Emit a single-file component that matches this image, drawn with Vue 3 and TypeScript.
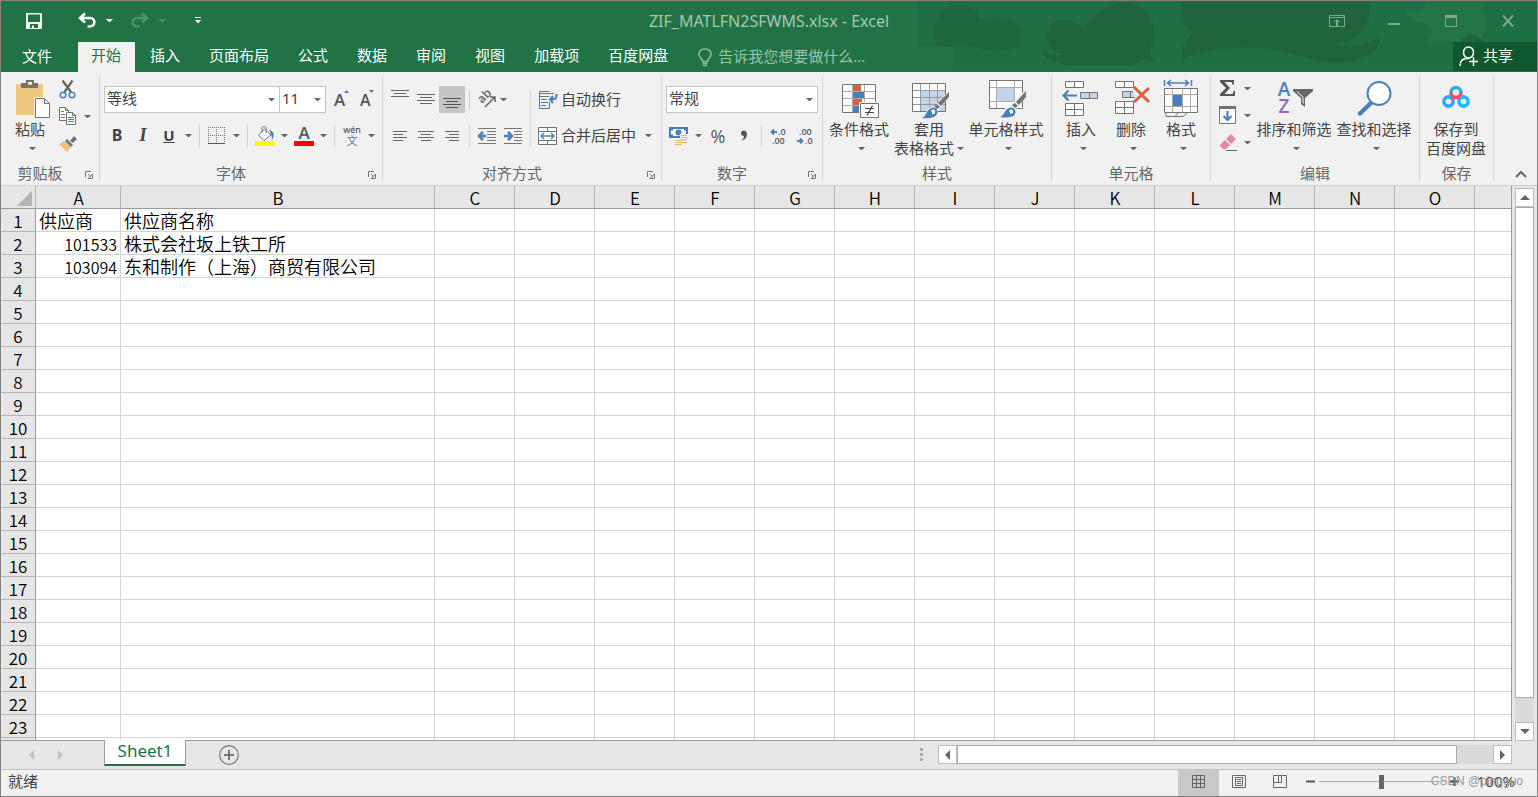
<script setup lang="ts">
import { ref } from 'vue'

const tabs: string[] = ['开始', '插入', '页面布局', '公式', '数据', '审阅', '视图', '加载项', '百度网盘']
const activeTab = ref('开始')

const columns: string[] = 'ABCDEFGHIJKLMNO'.split('')
const rowCount = 24

interface Cell {
  text: string
  numeric?: boolean
}

const cells: Record<string, Cell> = {
  A1: { text: '供应商' },
  B1: { text: '供应商名称' },
  A2: { text: '101533', numeric: true },
  B2: { text: '株式会社坂上铁工所' },
  A3: { text: '103094', numeric: true },
  B3: { text: '东和制作（上海）商贸有限公司' },
}

const zoom = ref(50)
</script>

<template>
  <div class="window">
    <header class="top">
      <svg class="clouds" width="638" height="71" viewBox="0 0 638 71" aria-hidden="true">
        <path d="M20 0H638V65H55V46H20Z" fill="#206e43" />
        <path d="M38 45C34 32 36 12 48 6C62 -1 78 6 80 18C96 14 118 16 121 28C123 36 118 42 124 43C112 52 88 52 74 46C62 44 50 46 38 45Z" fill="#1f673f" />
        <path d="M150 42C146 28 150 20 162 19C172 18 178 22 184 26C198 20 198 2 226 2C248 2 258 22 255 38C254 46 246 48 256 61C246 58 240 58 234 64H170C156 62 146 58 143 50C150 54 158 54 164 53C156 52 152 48 150 42Z" fill="#1f643d" />
        <path d="M282 0H470C474 20 462 38 440 44C456 46 470 42 480 37C482 48 468 60 446 61C420 64 400 52 370 48C338 44 306 48 284 58C280 46 288 40 294 32C284 26 282 12 282 0Z" fill="#1f643d" />
        <path d="M526 0H580C588 14 590 30 580 41H530C536 30 532 22 520 20C510 18 504 14 508 10C514 10 520 12 524 10Z" fill="#237548" />
        <path d="M562 42C564 32 578 30 584 42Z" fill="#1f643d" />
      </svg>
      <div class="titlebar">
        <div class="quick">
          <button class="save" aria-label="保存">
            <svg width="16" height="16" viewBox="0 0 16 16"><path d="M0 0H16V16H0ZM2 1.500V9H14V1.500ZM4 11V15H6V12.500H8V15H12V11Z" fill="#f0f5f2" fill-rule="evenodd" /></svg>
          </button>
          <button class="undo" aria-label="撤消">
            <svg width="18" height="15" viewBox="0 0 18 15"><path d="M7 .5L2 5L7 9.500M2.500 5H12C18 5 18 13.500 11 13.500H9.500" fill="none" stroke="#fff" stroke-width="2.500" /></svg>
          </button>
          <i class="arr light"></i>
          <button class="redo" aria-label="恢复">
            <svg width="18" height="15" viewBox="0 0 18 15"><path d="M11 .5L16 5L11 9.500M15.500 5H6C0 5 0 13.500 7 13.500H8.500" fill="none" stroke="#4f9070" stroke-width="2.500" /></svg>
          </button>
          <i class="arr dim"></i>
          <button class="custom" aria-label="自定义快速访问工具栏">
            <svg width="6" height="7" viewBox="0 0 6 7"><path d="M0 0H6V1H0ZM0 3H6L3 6.500Z" fill="#fff" /></svg>
          </button>
        </div>
        <h1 class="title">ZIF_MATLFN2SFWMS.xlsx - Excel</h1>
        <div class="controls">
          <button aria-label="功能区显示选项">
            <svg width="16" height="12" viewBox="0 0 16 12"><path d="M.5 .5H15.500V11.500H.5ZM0 2.500H16M5 7.500L8 4.500L11 7.500" fill="none" stroke="#7aa98d" /><path d="M8 5V11" stroke="#7aa98d" stroke-width="2" /></svg>
          </button>
          <button aria-label="最小化">
            <svg width="12" height="12" viewBox="0 0 12 12"><path d="M0 8H12V10H0Z" fill="#7aa98d" /></svg>
          </button>
          <button aria-label="最大化">
            <svg width="12" height="12" viewBox="0 0 12 12"><path d="M0 0H12V12H0ZM1 3V11H11V3Z" fill="#7aa98d" fill-rule="evenodd" /></svg>
          </button>
          <button aria-label="关闭">
            <svg width="12" height="12" viewBox="0 0 12 12"><path d="M1 .5L11 11.500M11 .5L1 11.500" stroke="#7aa98d" stroke-width="2" /></svg>
          </button>
        </div>
      </div>
      <nav class="tabs">
        <button class="file">文件</button>
        <button v-for="t in tabs" :key="t" class="tab" :class="{ active: t === activeTab }" @click="activeTab = t">{{ t }}</button>
        <label class="tell">
          <svg width="14" height="19" viewBox="0 0 14 19"><path d="M4.500 13.500C4.500 10.500 1 9.500 1 6.500C1 3 3.500 1 7 1S13 3 13 6.500C13 9.500 9.500 10.500 9.500 13.500ZM4.500 15.500H9.500M5 17.500H9" fill="none" stroke="#8fbda3" stroke-width="1.500" /></svg>
          <input type="text" placeholder="告诉我您想要做什么..." aria-label="告诉我您想要做什么" />
        </label>
        <button class="share">
          <svg width="20" height="21" viewBox="0 0 20 21"><g fill="none" stroke="#fff" stroke-width="1.500"><ellipse cx="9.500" cy="6.500" rx="5" ry="5.500" /><path d="M1 20C1 15 4 12.500 8 12.500H10M14.500 11V20M10 15.500H19" /></g></svg>
          <span>共享</span>
        </button>
      </nav>
    </header>

    <section class="ribbon">
      <div class="group g-clip">
        <div class="body">
          <button class="big paste">
            <svg width="40" height="40" viewBox="0 0 40 40">
              <path d="M6 4H33V35H6Z" fill="#edc87e" />
              <path d="M11 3H16V0H24V3H28V8H11ZM18 2V5H22V2Z" fill="#737373" fill-rule="evenodd" />
              <path d="M24 17H36L41 23V39H24Z" fill="#f1f1f1" />
              <path d="M25.500 18.500H34.500L39.500 23.500V37.500H25.500ZM34.500 18.500V23.500H39.500" fill="#fff" stroke="#737373" />
            </svg>
            <span>粘贴</span><span class="drop"><i class="arr"></i></span>
          </button>
          <div class="stack">
            <button aria-label="剪切">
              <svg width="18" height="19" viewBox="0 0 18 19"><path d="M3.500 .5L12 12M13.500 .5L5.500 12" stroke="#666" stroke-width="2.200" fill="none" /><circle cx="4" cy="15" r="2.800" fill="none" stroke="#4a80b8" stroke-width="1.500" /><circle cx="13" cy="15" r="2.800" fill="none" stroke="#4a80b8" stroke-width="1.500" /></svg>
            </button>
            <button aria-label="复制">
              <svg width="18" height="19" viewBox="0 0 18 19"><path d="M.5 .5H6.500L9.500 3.500V13.500H.5ZM6.500 .5V3.500H9.500" fill="#fff" stroke="#737373" /><path d="M2 4.500H5M2 7.500H6M2 10.500H6" stroke="#4a80b8" /><path d="M7.500 5.500H13.500L16.500 8.500V17.500H7.500ZM13.500 5.500V8.500H16.500" fill="#fff" stroke="#737373" /><path d="M9 10.500H15M9 12.500H15M9 14.500H15" stroke="#4a80b8" /></svg>
              <i class="arr"></i>
            </button>
            <button aria-label="格式刷">
              <svg width="18" height="18" viewBox="0 0 18 18"><path d="M0 9L5 6L12 12L8 17Z" fill="#edc17c" /><path d="M6 6L8 4L14 10L12 12ZM11 6L15 1L18 4L14 8Z" fill="#737373" /></svg>
            </button>
          </div>
        </div>
        <div class="caption launched">剪贴板<svg class="launch" width="8" height="8" viewBox="0 0 8 8"><path d="M.5 6V.5H6M3 3L6 6M7.500 3V7.500H3Z" fill="none" stroke="#777" /></svg></div>
      </div>

      <div class="group g-font">
        <div class="rows">
          <div class="row">
            <div class="combo family"><select aria-label="字体"><option>等线</option></select><i class="arr"></i></div>
            <div class="combo size"><select aria-label="字号"><option>11</option></select><i class="arr"></i></div>
            <button class="ib grow-font" aria-label="增大字号"><svg width="18" height="20" viewBox="0 0 18 20"><text x="0" y="16" class="glyph">A</text><path d="M10 3L12.500 0L15 3Z" fill="#4a80b8" /></svg></button>
            <button class="ib" aria-label="减小字号"><svg width="18" height="20" viewBox="0 0 18 20"><text x="0" y="16" class="glyph small">A</text><path d="M9 0L11.500 3L14 0Z" fill="#4a80b8" /></svg></button>
          </div>
          <div class="row">
            <button class="ib bold">B</button>
            <button class="ib italic">I</button>
            <button class="ib under">U</button>
            <i class="arr sp"></i><i class="sep"></i>
            <button class="ib" aria-label="边框"><svg width="18" height="18" viewBox="0 0 18 18"><path d="M.5 0V17M8.500 0V17M16.500 0V17M0 .5H17M0 8.500H17" stroke="#777" stroke-dasharray="1 1" /><path d="M0 16.500H17" stroke="#555" /></svg></button>
            <i class="arr sp"></i><i class="sep"></i>
            <button class="ib" aria-label="填充颜色"><svg width="20" height="20" viewBox="0 0 20 20"><path d="M9.500 3L16 9L9 14.500L3.500 9Z" fill="#fff" stroke="#737373" /><path d="M7 7V2C7 0 11 0 11 2V7" fill="none" stroke="#737373" /><path d="M14 4C19 5 20 9 17 14C17 10 16 8 14 4Z" fill="#4a80b8" /><path d="M0 15H20V20H0Z" fill="#ff0" /></svg></button>
            <i class="arr sp"></i>
            <button class="ib font-color" aria-label="字体颜色"><svg width="20" height="20" viewBox="0 0 20 20"><text x="10" y="13" text-anchor="middle" class="glyph">A</text><path d="M0 15H20V20H0Z" fill="#f00" /></svg></button>
            <i class="arr sp"></i><i class="sep"></i>
            <button class="ib wen" aria-label="拼音指南"><svg width="20" height="20" viewBox="0 0 20 20"><text x="10" y="7" text-anchor="middle" class="pinyin">wén</text><text x="10" y="19" text-anchor="middle" class="hanzi">文</text></svg></button>
            <i class="arr sp"></i>
          </div>
        </div>
        <div class="caption launched">字体<svg class="launch" width="8" height="8" viewBox="0 0 8 8"><path d="M.5 6V.5H6M3 3L6 6M7.500 3V7.500H3Z" fill="none" stroke="#777" /></svg></div>
      </div>

      <div class="group g-align">
        <div class="cols">
          <div class="rows">
            <div class="row">
              <button class="ib" aria-label="顶端对齐"><svg width="18" height="20" viewBox="0 0 18 20"><path d="M0 .5H18M3 3.500H15M0 6.500H18" stroke="#666" /></svg></button>
              <button class="ib" aria-label="垂直居中"><svg width="18" height="20" viewBox="0 0 18 20"><path d="M0 4.500H18M3 7.500H15M0 10.500H18M3 13.500H15" stroke="#666" /></svg></button>
              <button class="ib pressed" aria-label="底端对齐"><svg width="18" height="20" viewBox="0 0 18 20"><path d="M0 8.500H18M3 11.500H15M0 14.500H18M3 17.500H15" stroke="#555" /></svg></button>
              <i class="sep"></i>
              <button class="ib" aria-label="方向"><svg width="20" height="20" viewBox="0 0 20 20"><text x="0" y="0" class="orient" transform="translate(5 14) rotate(-45)">ab</text><path d="M8 17L18 7M13 7H18V12" fill="none" stroke="#666" stroke-width="1.500" /></svg></button>
              <i class="arr"></i>
            </div>
            <div class="row">
              <button class="ib" aria-label="左对齐"><svg width="14" height="12" viewBox="0 0 14 12"><path d="M0 1.500H14M0 4.500H10M0 7.500H14M0 10.500H10" stroke="#666" /></svg></button>
              <button class="ib" aria-label="居中"><svg width="16" height="12" viewBox="0 0 16 12"><path d="M0 1.500H16M3 4.500H13M0 7.500H16M3 10.500H13" stroke="#666" /></svg></button>
              <button class="ib" aria-label="右对齐"><svg width="14" height="12" viewBox="0 0 14 12"><path d="M0 1.500H14M4 4.500H14M0 7.500H14M4 10.500H14" stroke="#666" /></svg></button>
              <i class="sep"></i>
              <button class="ib" aria-label="减少缩进量"><svg width="18" height="16" viewBox="0 0 18 16"><path d="M0 .5H18M9 3.500H18M9 6.500H18M9 9.500H18M9 12.500H18M0 15.500H18" stroke="#777" /><path d="M8 8H2M5 4L1 8L5 12" fill="none" stroke="#4a80b8" stroke-width="2.500" /></svg></button>
              <button class="ib" aria-label="增加缩进量"><svg width="18" height="16" viewBox="0 0 18 16"><path d="M0 .5H18M10 3.500H18M10 6.500H18M10 9.500H18M10 12.500H18M0 15.500H18" stroke="#777" /><path d="M0 8H6M4 4L8 8L4 12" fill="none" stroke="#4a80b8" stroke-width="2.500" /></svg></button>
            </div>
          </div>
          <i class="sep tall"></i>
          <div class="rows labelled">
            <div class="row">
              <button class="wide"><svg width="20" height="20" viewBox="0 0 20 20"><path d="M11.500 1.500H1.500V6.500H11.500M1.500 6.500V18.500H11.500V12" fill="none" stroke="#737373" /><path d="M2 3.500H16M3 9.500H9M3 12.500H10M3 15.500H8" stroke="#4a80b8" /><path d="M18.500 4V6C18.500 9 16 9.500 12 9.500M15 6L12 9.500L15 13" fill="none" stroke="#4a80b8" stroke-width="2" /></svg>自动换行</button>
            </div>
            <div class="row">
              <button class="wide"><svg width="20" height="20" viewBox="0 0 20 20"><path d="M.5 1.500H18.500V18.500H.5ZM.5 5.500H18.500M.5 14.500H18.500M9.500 1.500V5.500M9.500 14.500V18.500" fill="#fff" stroke="#737373" /><path d="M3 10H16M6 7L3 10L6 13M13 7L16 10L13 13" fill="none" stroke="#4a80b8" stroke-width="1.500" /></svg>合并后居中</button>
              <i class="arr merge"></i>
            </div>
          </div>
        </div>
        <div class="caption launched">对齐方式<svg class="launch" width="8" height="8" viewBox="0 0 8 8"><path d="M.5 6V.5H6M3 3L6 6M7.500 3V7.500H3Z" fill="none" stroke="#777" /></svg></div>
      </div>

      <div class="group g-number">
        <div class="rows">
          <div class="row">
            <div class="combo format"><select aria-label="数字格式"><option>常规</option></select><i class="arr"></i></div>
          </div>
          <div class="row">
            <button class="ib" aria-label="会计数字格式"><svg width="20" height="20" viewBox="0 0 20 20"><path d="M0 1H19V12H0Z" fill="#4a80b8" /><path d="M4 3H15V4.500H17V8.500H15V10H4V8.500H2V4.500H4Z" fill="#fff" /><circle cx="9.500" cy="6.500" r="3" fill="#4a80b8" /><path d="M11 8H20V20H6V12H11Z" fill="#f1f1f1" /><path d="M12 9.500H18M12 11.500H19M12 13.500H18M6 14.500H13M6 16.500H14M6 18.500H13M14 16.500H18" stroke="#e8b96c" /></svg></button>
            <i class="arr sp"></i>
            <button class="ib percent">%</button>
            <button class="ib comma" aria-label="千位分隔样式"><svg width="8" height="12" viewBox="0 0 8 12"><path d="M1 3C1 -.5 7 -.5 7 4C7 8 4 10 1 11C3 9 4 8 4 6C2 6 1 5 1 3Z" fill="#555" /></svg></button>
            <i class="sep"></i>
            <button class="ib" aria-label="增加小数位数"><svg width="18" height="18" viewBox="0 0 18 18"><text x="8" y="8" class="dec">.0</text><text x="2" y="17" class="dec">.00</text><path d="M7 5H2M4 2.500L1.500 5L4 7.500" fill="none" stroke="#4a80b8" stroke-width="1.800" /></svg></button>
            <button class="ib" aria-label="减少小数位数"><svg width="18" height="18" viewBox="0 0 18 18"><text x="3" y="8" class="dec">.00</text><text x="9" y="17" class="dec">.0</text><path d="M1 14H6M4 11.500L6.500 14L4 16.500" fill="none" stroke="#4a80b8" stroke-width="1.800" /></svg></button>
          </div>
        </div>
        <div class="caption launched">数字<svg class="launch" width="8" height="8" viewBox="0 0 8 8"><path d="M.5 6V.5H6M3 3L6 6M7.500 3V7.500H3Z" fill="none" stroke="#777" /></svg></div>
      </div>

      <div class="group g-style">
        <div class="body">
          <button class="big w66">
            <svg width="40" height="40" viewBox="0 0 40 40">
              <path d="M3.500 4.500H36.500V32.500H3.500Z" fill="#fff" />
              <path d="M14 5H22V11H14ZM14 18H23V25H14Z" fill="#d9603f" /><path d="M14 12H25V18H14ZM14 26H20V32H14Z" fill="#4a80b8" />
              <path d="M3.500 11.500H36.500M3.500 18.500H36.500M3.500 25.500H36.500M13.500 4V32M25.500 4V32" stroke="#aaa" />
              <path d="M3.500 4.500H36.500V32.500H3.500Z" fill="none" stroke="#737373" />
              <path d="M20 22H40V40H20Z" fill="#f1f1f1" />
              <path d="M21.500 23.500H39.500V37.500H21.500Z" fill="#fff" stroke="#737373" />
              <path d="M26 28.500H35M26 32.500H35M33.500 25.500L28 35.500" stroke="#444" stroke-width="1.200" />
            </svg>
            <span>条件格式</span><span class="drop"><i class="arr"></i></span>
          </button>
          <button class="big w74">
            <svg width="40" height="40" viewBox="0 0 40 40">
              <path d="M3.500 3.500H36.500V31.500H3.500Z" fill="#fff" /><path d="M12 11H36V31H12Z" fill="#c3d4ea" />
              <path d="M3.500 10.500H36.500M3.500 17.500H36.500M3.500 24.500H36.500M11.500 4V31M20.500 4V31M28.500 4V31" stroke="#999" />
              <path d="M3.500 3.500H36.500V31.500H3.500Z" fill="none" stroke="#737373" />
              <path d="M40 11V17L29 31C28 37 20 39 11 39C17 35 17 30 21 27L26 26Z" fill="#f1f1f1" />
              <path d="M40 12V17L32 26L29 23ZM28 24L31 27L28 29L25 26Z" fill="#737373" />
              <path d="M13 38C18 36 17 30 22 28C26 26 30 30 28 34C26 38 19 39 13 38Z" fill="#4a80b8" /><path d="M22 31C24 28 27 30 26 33L23 35C24 33 23 32 22 31Z" fill="#fff" />
            </svg>
            <span>套用</span><span>表格格式<i class="arr inline"></i></span>
          </button>
          <button class="big w80">
            <svg width="40" height="40" viewBox="0 0 40 40">
              <path d="M3.500 .5H36.500V28.500H3.500Z" fill="#fff" /><path d="M11 8H28V21H11Z" fill="#c3d4ea" />
              <path d="M3.500 7.500H36.500M3.500 21.500H36.500M10.500 1V28M28.500 1V28" stroke="#aaa" />
              <path d="M3.500 .5H36.500V28.500H3.500Z" fill="none" stroke="#737373" />
              <path d="M40 9V17L30 29C29 36 20 39 11 38C17 35 17 30 21 27L27 23Z" fill="#f1f1f1" />
              <path d="M40 11V17L33 25L30 22ZM29 23L32 26L29 28L26 25Z" fill="#737373" />
              <path d="M14 37C19 35 18 30 23 28C27 26 31 30 29 34C27 38 20 38 14 37Z" fill="#4a80b8" /><path d="M23 31C25 28 28 30 27 33L24 34C25 33 24 32 23 31Z" fill="#fff" />
            </svg>
            <span>单元格样式</span><span class="drop"><i class="arr"></i></span>
          </button>
        </div>
        <div class="caption">样式</div>
      </div>

      <div class="group g-cells">
        <div class="body">
          <button class="big w50">
            <svg width="40" height="40" viewBox="0 0 40 40">
              <path d="M4.500 1.500H22.500V7.500H4.500ZM13.500 1.500V7.500M4.500 23.500H22.500V35.500H4.500ZM13.500 23.500V35.500M4.500 29.500H22.500" fill="#fff" stroke="#737373" />
              <path d="M19.500 12.500H36.500V18.500H19.500ZM28.500 12.500V18.500" fill="#c3d4ea" stroke="#737373" />
              <path d="M16 15.500H3M7.500 10.500L2.500 15.500L7.500 20.500" fill="none" stroke="#4a80b8" stroke-width="2.200" />
            </svg>
            <span>插入</span><span class="drop"><i class="arr"></i></span>
          </button>
          <button class="big w50">
            <svg width="40" height="40" viewBox="0 0 40 40">
              <path d="M4.500 1.500H22.500V7.500H4.500ZM13.500 1.500V7.500M4.500 21.500H22.500V33.500H4.500ZM13.500 21.500V33.500M4.500 27.500H22.500" fill="#fff" stroke="#737373" />
              <path d="M22 11.500H11.500V17.500H24M19.500 11.500V17.500" fill="#c3d4ea" stroke="#737373" />
              <path d="M23 7L38 22M38 8L23 22" stroke="#d9603f" stroke-width="3" />
            </svg>
            <span>删除</span><span class="drop"><i class="arr"></i></span>
          </button>
          <button class="big w50">
            <svg width="40" height="40" viewBox="0 0 40 40">
              <path d="M3.500 0V6M30.500 0V6M6 3H28M10 0L6.500 3L10 6M24 0L27.500 3L24 6" fill="none" stroke="#4a80b8" stroke-width="1.500" />
              <path d="M3.500 8.500H36.500V32.500H3.500Z" fill="#fff" /><path d="M12 15H21V26H12Z" fill="#4a80b8" />
              <path d="M3.500 14.500H36.500M3.500 26.500H36.500M11.500 9V32M21.500 9V32M29.500 9V32" stroke="#aaa" />
              <path d="M3.500 8.500H36.500V32.500H3.500ZM5 33V36.500H14L17 33M14 36.500H22L26 33" fill="none" stroke="#737373" />
            </svg>
            <span>格式</span><span class="drop"><i class="arr"></i></span>
          </button>
        </div>
        <div class="caption">单元格</div>
      </div>

      <div class="group g-edit">
        <div class="body">
          <div class="stack">
            <button aria-label="自动求和"><svg width="18" height="18" viewBox="0 0 18 18"><path d="M1 1H15V5.500H13.500L12.500 3H5.500L11 9L5.500 15H13.500L14.500 12H16V17H1V15L7 9L1 3Z" fill="#555" /></svg><i class="arr"></i></button>
            <button aria-label="填充"><svg width="18" height="18" viewBox="0 0 18 18"><path d="M.5 .5H16.500V17.500H.5Z" fill="#fff" stroke="#737373" /><path d="M0 0H17V3H0Z" fill="#737373" /><path d="M8.500 5V14M4.500 10L8.500 14L12.500 10" fill="none" stroke="#4a80b8" stroke-width="2.200" /></svg><i class="arr"></i></button>
            <button aria-label="清除"><svg width="18" height="18" viewBox="0 0 18 18"><path d="M12 1L17 6L12 11L7 6ZM6 7L11 12L7 16H4L1 13V12Z" fill="#e8879b" /><path d="M7 17.500H18" stroke="#666" /></svg><i class="arr"></i></button>
          </div>
          <button class="big w80">
            <svg width="40" height="40" viewBox="0 0 40 40">
              <text x="10" y="16" text-anchor="middle" class="az">A</text><text x="10" y="33" text-anchor="middle" class="az z">Z</text>
              <path d="M19 9H39V11L31 18V27L27 24V18L19 11Z" fill="#666" /><path d="M28.500 17L23 12V11L29.500 17V24L28.500 23Z" fill="#fff" />
            </svg>
            <span>排序和筛选</span><span class="drop"><i class="arr"></i></span>
          </button>
          <button class="big w80">
            <svg width="40" height="40" viewBox="0 0 40 40"><path d="M18 22L6 33.500" stroke="#4a80b8" stroke-width="4.500" stroke-linecap="round" /><circle cx="25" cy="13.500" r="11.500" fill="#fff" stroke="#4a80b8" stroke-width="2" /></svg>
            <span>查找和选择</span><span class="drop"><i class="arr"></i></span>
          </button>
        </div>
        <div class="caption">编辑</div>
      </div>

      <div class="group g-save">
        <div class="body">
          <button class="big w66">
            <svg width="40" height="40" viewBox="0 0 40 40"><g fill="none" stroke-width="3.600"><circle cx="20" cy="12.500" r="5" stroke="#25b0f0" /><circle cx="12.500" cy="21.500" r="4.600" stroke="#2fa8f5" /><circle cx="27.500" cy="21.500" r="4.600" stroke="#1cbdf8" /><path d="M15 12.500A5 5 0 0 0 25 12.500" stroke="#f5506a" /><path d="M15.500 17L18 19M24.500 17L22 19" stroke="#f5506a" stroke-width="2" /></g></svg>
            <span>保存到</span><span>百度网盘</span>
          </button>
        </div>
        <div class="caption">保存</div>
      </div>
      <button class="collapse" aria-label="折叠功能区"><svg width="12" height="8" viewBox="0 0 12 8"><path d="M1 7L6 2L11 7" fill="none" stroke="#666" stroke-width="2" /></svg></button>
    </section>

    <main class="work">
      <div class="grid">
        <table>
          <colgroup>
            <col class="c-head" /><col class="c-a" /><col class="c-b" /><col v-for="c in columns.slice(2)" :key="c" class="c-n" /><col />
          </colgroup>
          <thead>
            <tr>
              <th class="corner"><svg width="15" height="15" viewBox="0 0 15 15"><path d="M15 0V15H0Z" fill="#b4b4b4" /></svg></th>
              <th v-for="c in columns" :key="c" scope="col">{{ c }}</th><th></th>
            </tr>
          </thead>
          <tbody>
            <tr v-for="r in rowCount" :key="r">
              <th scope="row">{{ r }}</th>
              <td v-for="c in columns" :key="c" :class="{ num: cells[c + r]?.numeric }">{{ cells[c + r]?.text }}</td><td></td>
            </tr>
          </tbody>
        </table>
      </div>
      <div class="vscroll">
        <button aria-label="向上滚动"><i class="tri up"></i></button>
        <div class="thumb"></div>
        <div class="rest"></div>
        <button aria-label="向下滚动"><i class="tri down"></i></button>
      </div>
    </main>

    <div class="sheets">
      <button class="step" aria-label="上一张工作表"><i class="tri left pale"></i></button>
      <button class="step" aria-label="下一张工作表"><i class="tri right pale"></i></button>
      <button class="sheet">Sheet1</button>
      <button class="add" aria-label="新工作表"><svg width="20" height="20" viewBox="0 0 20 20"><circle cx="10" cy="10" r="9.300" fill="none" stroke="#777" stroke-width="1.200" /><path d="M10 5V15M5 10H15" stroke="#777" stroke-width="2" /></svg></button>
      <svg class="dots" width="3" height="13" viewBox="0 0 3 13"><path d="M0 0H3V3H0ZM0 5H3V8H0ZM0 10H3V13H0Z" fill="#aaa" /></svg>
      <div class="hscroll">
        <button aria-label="向左滚动"><i class="tri left"></i></button>
        <div class="thumb"></div>
        <div class="rest"></div>
        <button aria-label="向右滚动"><i class="tri right"></i></button>
      </div>
    </div>

    <footer class="status">
      <span class="ready">就绪</span>
      <button class="view on" aria-label="普通"><svg width="13" height="13" viewBox="0 0 13 13"><path d="M.5 .5H12.500V12.500H.5ZM.5 4.500H12.500M.5 8.500H12.500M4.500 .5V12.500M8.500 .5V12.500" fill="none" stroke="#666" /></svg></button>
      <button class="view" aria-label="页面布局视图"><svg width="14" height="13" viewBox="0 0 14 13"><path d="M.5 .5H13.500V12.500H.5ZM3.500 2.500H10.500V10.500H3.500ZM5 4.500H9M5 6.500H9M5 8.500H9" fill="none" stroke="#666" /></svg></button>
      <button class="view" aria-label="分页预览"><svg width="14" height="13" viewBox="0 0 14 13"><path d="M.5 .5H13.500V12.500H.5ZM5.500 .5V7.500M8.500 .5V7.500M.5 7.500H8.500" fill="none" stroke="#666" /></svg></button>
      <button class="zoom-step" aria-label="缩小"><svg width="9" height="9" viewBox="0 0 9 9"><path d="M0 3.500H9V5.500H0Z" fill="#555" /></svg></button>
      <input v-model="zoom" type="range" min="0" max="100" aria-label="缩放" />
      <button class="zoom-step" aria-label="放大"><svg width="9" height="9" viewBox="0 0 9 9"><path d="M0 3.500H9V5.500H0ZM3.500 0H5.500V9H3.500Z" fill="#444" /></svg></button>
      <span class="percentage">100%</span>
      <span class="mark">CSDN @pingguo</span>
    </footer>
  </div>
</template>

<style>
html,
body {
  margin: 0;
  background: #fff;
}
</style>

<style scoped>
* {
  box-sizing: border-box;
}
.window {
  display: flex;
  flex-direction: column;
  height: 100vh;
  border: 1px solid #838383;
  background: #f1f1f1;
  color: #444;
  overflow: hidden;
  font: 15px/19px "Noto Sans", "Noto Sans CJK SC", sans-serif;
}
button,
input,
select {
  margin: 0;
  padding: 0;
  border: 0;
  background: none;
  color: inherit;
  font: inherit;
  outline: none;
}
button {
  white-space: nowrap;
}
svg {
  display: block;
  flex: none;
  overflow: visible;
}
i {
  flex: none;
}
.arr {
  display: block;
  width: 7px;
  height: 3px;
  border: 3px solid transparent;
  border-top-color: #666;
  border-bottom: 0;
}
.arr.light {
  border-top-color: #fff;
}
.arr.dim {
  border-top-color: #4f9070;
}

/* title and tabs */
.top {
  position: relative;
  flex: none;
  background: #217346;
}
.clouds {
  position: absolute;
  top: 0;
  right: 0;
  overflow: hidden;
}
.titlebar {
  position: relative;
  display: flex;
  align-items: center;
  justify-content: space-between;
  height: 41px;
  padding-bottom: 2px;
}
.quick {
  display: flex;
  align-items: center;
  flex: 1;
  padding-left: 25px;
}
.undo {
  margin: 0 10px 0 36px;
}
.redo {
  margin: 0 10px 0 18px;
}
.custom {
  margin-left: 29px;
}
.title {
  margin: 0 24px 0 0;
  padding-top: 2px;
  color: #a6c7b5;
  font-size: 16px;
  font-weight: 400;
}
.controls {
  display: flex;
  flex: 1;
  justify-content: flex-end;
  padding-right: 1px;
}
.controls button {
  display: flex;
  align-items: center;
  justify-content: center;
  width: 57px;
  height: 38px;
}
.tabs {
  position: relative;
  display: flex;
  height: 30px;
  gap: 2px;
  color: #fff;
}
.file {
  padding: 0 24px 2px 21px;
}
.tab {
  padding: 0 14px 4px 13px;
}
.tab.active {
  background: #f1f1f1;
  color: #217346;
}
.tell {
  display: flex;
  align-items: center;
  gap: 6px;
  padding-left: 14px;
}
.tell input {
  width: 180px;
  padding-bottom: 2px;
}
.tell input::placeholder {
  color: #9cc2ac;
  opacity: 1;
}
.share {
  display: flex;
  align-items: center;
  gap: 4px;
  width: 84px;
  height: 29px;
  margin-left: auto;
  padding-left: 6px;
  background: #10592f;
}
.share span {
  padding-bottom: 2px;
}

/* ribbon */
.ribbon {
  display: flex;
  flex: none;
  height: 114px;
  padding-top: 4px;
  border-bottom: 1px solid #d0d0d0;
}
.group {
  display: flex;
  flex-direction: column;
  justify-content: space-between;
  flex: none;
  height: 105px;
  border-right: 1px solid #d4d4d4;
}
.g-clip {
  width: 99px;
}
.g-font {
  width: 283px;
}
.g-align {
  width: 279px;
}
.g-number {
  width: 161px;
}
.g-style {
  width: 229px;
}
.g-cells {
  width: 159px;
}
.g-edit {
  width: 209px;
}
.g-save {
  width: 74px;
}
.body {
  display: flex;
  padding-left: 3px;
}
.g-cells .body {
  padding-left: 4px;
}
.caption {
  position: relative;
  height: 15px;
  line-height: 14px;
  text-align: center;
  color: #666;
}
.launched {
  padding-right: 20px;
}
.launch {
  position: absolute;
  right: 6px;
  bottom: 2px;
}
.big {
  display: flex;
  flex-direction: column;
  align-items: center;
  padding-top: 4px;
}
.big span {
  display: flex;
  align-items: center;
  justify-content: center;
  gap: 3px;
  height: 19px;
}
.big .drop {
  padding-left: 4px;
}
.paste {
  width: 52px;
}
.w50 {
  width: 50px;
}
.w66 {
  width: 66px;
}
.w74 {
  width: 74px;
}
.w80 {
  width: 80px;
}
.stack {
  display: flex;
  flex-direction: column;
}
.stack button {
  display: flex;
  align-items: center;
  gap: 7px;
  width: 40px;
  height: 27px;
  padding-left: 3px;
}
.g-edit .stack button {
  padding: 0 0 3px 5px;
}
.rows {
  display: flex;
  flex-direction: column;
  gap: 9px;
  padding: 10px 0 0 4px;
}
.row {
  display: flex;
  align-items: center;
  height: 27px;
}
.cols {
  display: flex;
}
.ib {
  display: flex;
  align-items: center;
  justify-content: center;
  width: 26px;
  height: 27px;
}
.grow-font {
  margin-left: 4px;
}
.pressed {
  background: #c5c5c5;
}
.sep {
  width: 1px;
  height: 22px;
  margin: 0 4px;
  background: #d4d4d4;
}
.sep.tall {
  height: 56px;
  margin: 14px 0 0;
}
.g-align .cols > .rows:first-child {
  width: 147px;
}
.rows.labelled {
  padding-left: 7px;
}
.sp {
  margin: 0 3px;
}
.bold {
  font-weight: 700;
  font-size: 16px;
}
.italic {
  font: italic 700 18px "Liberation Serif", serif;
}
.under {
  font-weight: 700;
  text-decoration: underline;
}
.combo {
  position: relative;
  height: 27px;
  border: 1px solid #c6c6c6;
  background: #fff;
}
.combo select {
  width: 100%;
  height: 100%;
  padding: 0 0 2px 2px;
  appearance: none;
}
.combo .arr {
  position: absolute;
  right: 4px;
  top: 11px;
}
.family {
  width: 176px;
}
.size {
  width: 47px;
  margin-left: -1px;
}
.format {
  width: 152px;
}
.wide {
  display: flex;
  align-items: center;
  gap: 3px;
}
.merge {
  margin-left: 9px;
}
.percent {
  color: #555;
  font: 18px "Open Sans", sans-serif;
}
.glyph {
  font: 600 17px "Open Sans", sans-serif;
  fill: #555;
}
.glyph.small {
  font-size: 16px;
}
.pinyin {
  font: 9px "Noto Sans", sans-serif;
  fill: #444;
}
.hanzi {
  font: 11px "Noto Sans CJK SC", sans-serif;
  fill: #4a80b8;
}
.orient {
  font: 600 12px "Open Sans", sans-serif;
  fill: #666;
}
.dec {
  font: 600 9px "Open Sans", sans-serif;
  fill: #555;
}
.az {
  font: 600 19px "Open Sans", sans-serif;
  fill: #4a80b8;
}
.az.z {
  fill: #9666b8;
}
.collapse {
  align-self: flex-end;
  margin: 0 10px 7px auto;
}

/* worksheet */
.work {
  display: flex;
  flex: 1;
  min-height: 0;
  background: #e6e6e6;
}
.grid {
  flex: 1;
  min-width: 0;
  overflow: hidden;
  border-right: 1px solid #9b9b9b;
  border-bottom: 1px solid #9b9b9b;
  background: #fff;
  color: #000;
}
table {
  width: 100%;
  table-layout: fixed;
  border-spacing: 0;
}
.c-head {
  width: 35px;
}
.c-a {
  width: 85px;
}
.c-b {
  width: 314px;
}
.c-n {
  width: 80px;
}
th,
td {
  height: 23px;
  padding: 0;
  border-right: 1px solid #d4d4d4;
  border-bottom: 1px solid #d4d4d4;
  font: 350 18px/22px "Noto Sans CJK SC", sans-serif;
  white-space: nowrap;
}
th {
  padding-top: 2px;
  background: #e6e6e6;
  font: 350 17px/20px "Noto Sans CJK SC", sans-serif;
  text-align: center;
}
thead th {
  padding-left: 1px;
  border-right-color: #b5b5b5;
  border-bottom-color: #9b9b9b;
}
tbody th {
  border-right-color: #9b9b9b;
  border-bottom-color: #b5b5b5;
}
th:last-child,
td:last-child {
  border-right: 0;
}
.corner svg {
  margin: 1px 3px 0 auto;
}
td {
  padding: 0 3px;
}
td.num {
  padding-top: 2px;
  font: 350 16px/20px "Noto Sans CJK SC", sans-serif;
  text-align: right;
}
.tri {
  display: block;
  border: 5px solid transparent;
}
.up {
  border-bottom-color: #666;
  border-top: 0;
}
.down {
  border-top-color: #666;
  border-bottom: 0;
}
.left {
  border-right-color: #666;
  border-left: 0;
}
.right {
  border-left-color: #666;
  border-right: 0;
}
.pale.left {
  border-right-color: #c0c0c0;
}
.pale.right {
  border-left-color: #c0c0c0;
}
.vscroll {
  display: flex;
  flex-direction: column;
  width: 19px;
  margin: 2px 3px 0;
  background: #dadada;
}
.vscroll button,
.hscroll button {
  display: flex;
  align-items: center;
  justify-content: center;
  flex: none;
  width: 19px;
  height: 19px;
  border: 1px solid #bdbdbd;
  background: #fff;
}
.thumb {
  border: 1px solid #ababab;
  background: #fff;
}
.vscroll .thumb {
  flex: 491;
}
.vscroll .rest {
  flex: 24;
}

/* sheet tabs */
.sheets {
  display: flex;
  align-items: center;
  flex: none;
  height: 29px;
  padding: 0 25px 1px 28px;
  border-bottom: 1px solid #c0c0c0;
  background: #e6e6e6;
}
.step {
  width: 5px;
  margin-right: 24px;
}
.sheet {
  position: relative;
  align-self: flex-start;
  width: 82px;
  height: 26px;
  margin: -1px 33px 0 17px;
  padding-bottom: 4px;
  border: 1px solid #9b9b9b;
  border-top: 0;
  border-bottom: 2px solid #217346;
  background: #fff;
  color: #217346;
  font-size: 17px;
}
.dots {
  margin: 0 15px 0 auto;
}
.hscroll {
  display: flex;
  width: 574px;
  background: #dadada;
}
.hscroll .thumb {
  flex: 500;
}
.hscroll .rest {
  flex: 36;
}

/* status bar */
.status {
  position: relative;
  display: flex;
  align-items: center;
  flex: none;
  height: 26px;
  padding: 0 22px 3px 0;
}
.ready {
  margin: 0 auto 0 7px;
}
.view {
  display: flex;
  align-items: center;
  justify-content: center;
  align-self: flex-start;
  width: 41px;
  height: 26px;
  padding-bottom: 3px;
}
.view.on {
  background: #c8c8c8;
}
.zoom-step {
  margin: 0 4px 0 5px;
}
input[type="range"] {
  width: 125px;
  height: 16px;
  margin: 0 1px 0 0;
  appearance: none;
}
input[type="range"]::-webkit-slider-runnable-track {
  height: 14px;
  background: linear-gradient(#ababab, #ababab) center / 100% 1px no-repeat;
}
input[type="range"]::-webkit-slider-thumb {
  width: 5px;
  height: 14px;
  appearance: none;
  background: #666;
}
.percentage {
  margin-left: 14px;
}
.mark {
  position: absolute;
  right: 14px;
  bottom: 6px;
  color: #999;
  font: 12px/18px "Liberation Sans", sans-serif;
}
</style>
